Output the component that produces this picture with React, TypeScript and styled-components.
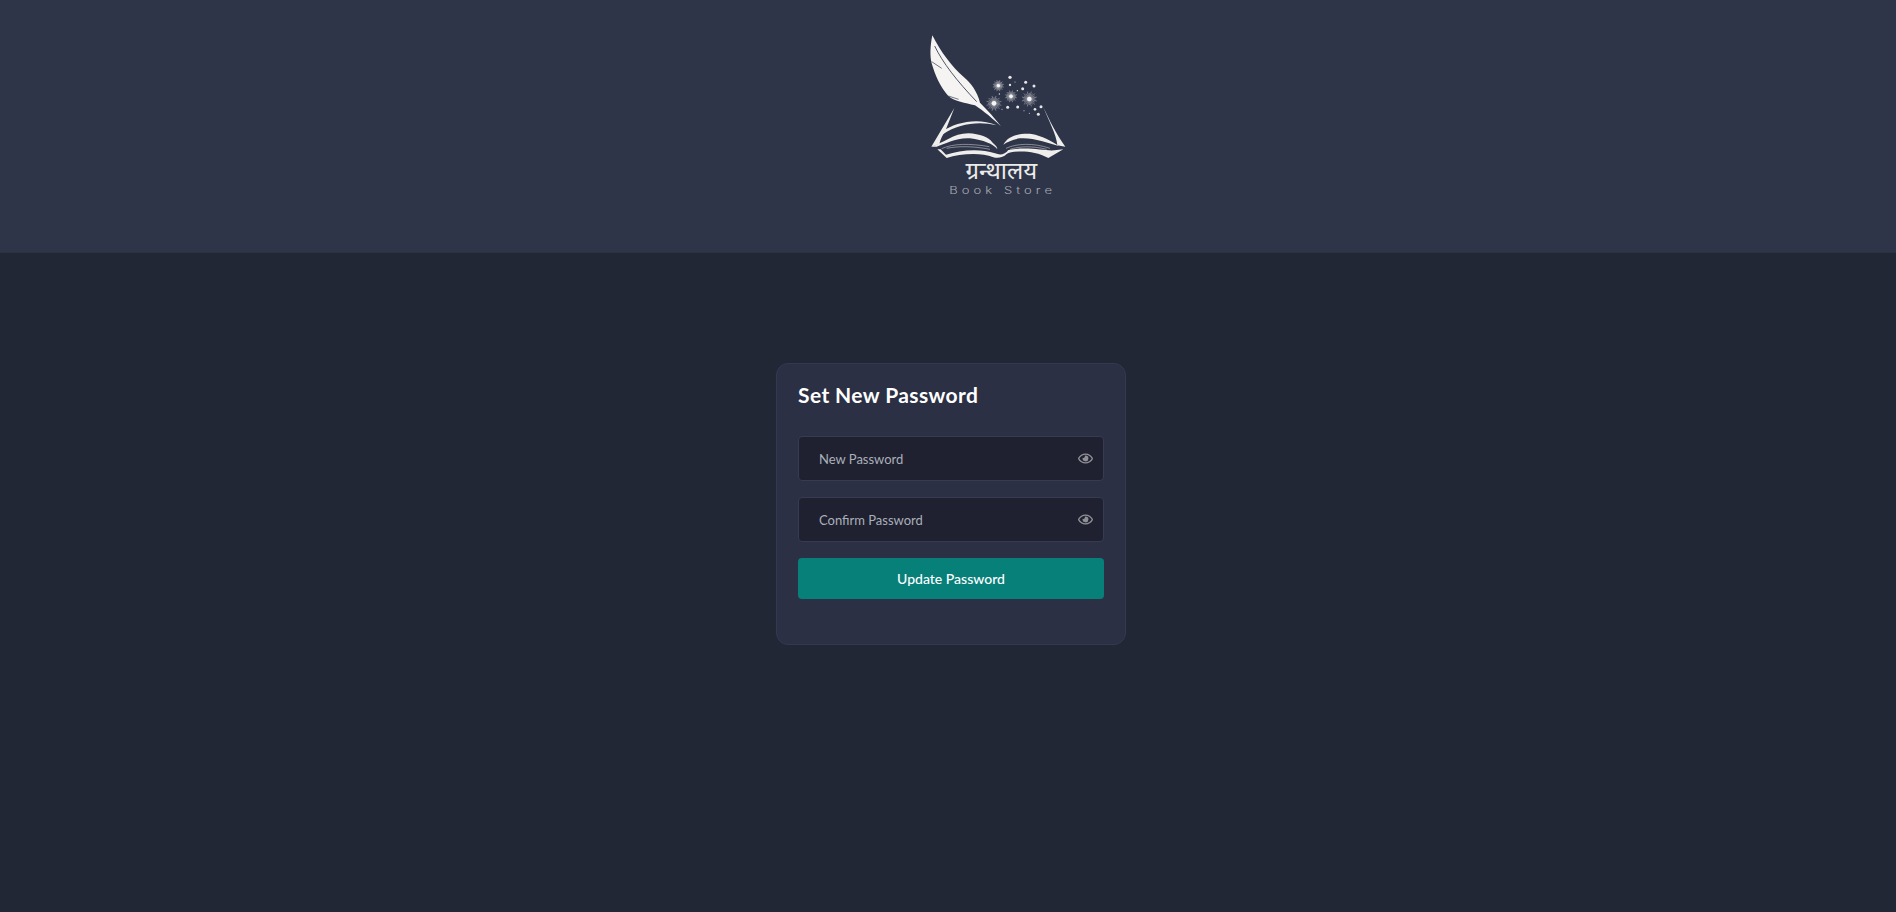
import React from "react";
import styled, { createGlobalStyle } from "styled-components";
import { FaRegEye } from "react-icons/fa";

const GlobalStyle = createGlobalStyle`
  html, body {
    margin: 0;
    padding: 0;
    background: #212735;
    font-family: "Lato", "Liberation Sans", sans-serif;
  }
  * { box-sizing: border-box; }
`;

const Page = styled.div`
  height: 912px;
  overflow: hidden;
  background: #212735;
  display: flex;
  flex-direction: column;
`;

const Header = styled.header`
  height: 253px;
  flex-shrink: 0;
  background: #2f3549;
  border-bottom: 1px solid #2b3143;
  display: flex;
  justify-content: center;
  align-items: flex-start;
  padding: 20px 0 0 104px;
`;

const Logo = styled.svg`
  width: 200px;
  height: 190px;
  display: block;
`;

const Main = styled.main`
  display: flex;
  justify-content: center;
  padding: 110px 0 0 6px;
`;

const Card = styled.form`
  width: 350px;
  height: 282px;
  background: #2b3044;
  border: 1px solid #333950;
  border-radius: 12px;
  padding: 16px 21px 0;
  display: flex;
  flex-direction: column;
`;

const Title = styled.h2`
  margin: 0 0 26px;
  font-family: "Lato", sans-serif;
  font-size: 21px;
  line-height: 30px;
  font-weight: 700;
  letter-spacing: 0.4px;
  color: #ffffff;
`;

const Field = styled.div`
  position: relative;
  height: 45px;
  margin-bottom: 16px;
`;

const Input = styled.input`
  width: 100%;
  height: 100%;
  background: #1f2130;
  border: 1px solid #363b50;
  border-radius: 4px;
  padding: 0 44px 0 20px;
  font-family: "Lato", sans-serif;
  font-size: 13px;
  color: #ffffff;
  outline: none;

  &::placeholder {
    color: #aab0ba;
    opacity: 1;
  }
`;

const EyeButton = styled.span`
  position: absolute;
  right: 11px;
  top: 15px;
  display: flex;
  color: #8f9095;
  font-size: 15px;
`;

const SubmitButton = styled.button`
  height: 41px;
  background: #08807a;
  border: none;
  border-radius: 4px;
  font-family: "Lato", sans-serif;
  font-size: 14px;
  font-weight: 500;
  color: #ffffff;
`;

const SparkRay = styled.line`
  stroke: #eeeeee;
  stroke-width: 1.2;
`;

function Spark({ x, y, r }: { x: number; y: number; r: number }) {
  const rays = Array.from({ length: 24 }, (_, i) => (i * Math.PI) / 12);
  return (
    <g>
      {rays.map((a, i) => {
        const len = i % 2 ? r : r * 0.8;
        return (
          <SparkRay
            key={i}
            x1={x}
            y1={y}
            x2={x + Math.cos(a) * len}
            y2={y + Math.sin(a) * len}
          />
        );
      })}
      <circle cx={x} cy={y} r={r * 0.3} fill="#f6f6f6" />
    </g>
  );
}

const dots: [number, number, number][] = [
  [330, 172, 5], [330, 195, 3.5], [377, 187, 4.5], [402, 198, 4.5], [368, 206, 4.5],
  [352, 212, 2], [298, 222, 2], [323, 262, 4.5], [353, 261, 4.5], [405, 268, 4],
  [423, 260, 4.5], [415, 283, 4.5], [372, 272, 1.5], [345, 186, 1.5], [388, 280, 1.5],
  [306, 268, 1.5],
];

function BookLogo() {
  return (
    <Logo viewBox="0 0 600 570" role="img" aria-label="Book Store logo">
      {/* feather */}
      <path
        d="M97 46 C90 80 90 110 95 130 C105 165 120 200 145 228 C165 245 195 248 225 256 C250 272 280 298 303 319 C285 295 262 270 240 248 C232 215 212 188 192 172 C155 140 122 95 97 46 Z"
        fill="#f5f4f3"
      />
      <path
        d="M104 78 C128 128 170 182 230 245"
        fill="none"
        stroke="#2f3549"
        strokeWidth="2.5"
      />
      <path d="M95 125 L125 145 M145 228 L176 238" stroke="#2f3549" strokeWidth="2" />

      {/* sparkles */}
      <Spark x={295} y={197} r={17} />
      <Spark x={282} y={250} r={23} />
      <Spark x={333} y={229} r={18} />
      <Spark x={388} y={237} r={23} />
      {dots.map(([x, y, r], i) => (
        <circle key={i} cx={x} cy={y} r={r} fill="#e6e6e6" />
      ))}

      {/* book */}
      <g fill="#efeeec">
        <path d="M163 264 L94 380 L118 372 C122 355 128 345 135 335 Z" />
        <path d="M124 335 C170 305 235 292 290 316 C235 302 175 312 130 342 Z" />
        <path d="M94 380 C130 370 160 340 205 340 C240 342 265 350 278 368 C288 376 292 382 292 388 C280 372 250 360 210 355 C170 352 135 372 110 380 Z" />
        <path d="M112 388 L140 414 C180 402 240 396 280 412 C295 416 310 412 320 402 C335 392 400 388 445 414 L490 388 L470 390 C440 396 390 378 325 390 C315 404 300 406 285 400 C240 384 180 390 138 404 L122 388 Z" />
        <path d="M430 262 C448 300 470 345 496 380 L472 376 C470 345 445 300 430 262 Z" />
        <path d="M310 374 C325 345 360 340 395 342 C425 348 455 362 476 378 C440 368 400 352 360 355 C340 358 322 365 310 374 Z" />
      </g>
      <g fill="none" stroke="#d4d4d6" strokeWidth="1.6">
        <path d="M125 386 C160 370 210 370 268 380" />
        <path d="M140 385 C175 378 220 378 270 388" />
        <path d="M318 385 C350 370 400 368 450 385" />
        <path d="M330 388 C360 378 400 378 440 388" />
      </g>

      {/* wordmark */}
      <text
        x="304"
        y="476"
        textAnchor="middle"
        fill="#ecebe9"
        fontSize="72"
        fontFamily="'Noto Sans Devanagari', 'Noto Sans', 'DejaVu Sans', sans-serif"
      >
        ग्रन्थालय
      </text>
      <text
        x="148"
        y="521"
        textLength="320"
        lengthAdjust="spacingAndGlyphs"
        fill="#a9abb2"
        fontSize="29"
        fontWeight="300"
        letterSpacing="9"
        fontFamily="'Inter', 'DejaVu Sans', sans-serif"
      >
        Book Store
      </text>
    </Logo>
  );
}

export default function App() {
  return (
    <Page>
      <GlobalStyle />
      <Header>
        <BookLogo />
      </Header>
      <Main>
        <Card onSubmit={(e) => e.preventDefault()}>
          <Title>Set New Password</Title>
          <Field>
            <Input type="password" placeholder="New Password" />
            <EyeButton>
              <FaRegEye />
            </EyeButton>
          </Field>
          <Field>
            <Input type="password" placeholder="Confirm Password" />
            <EyeButton>
              <FaRegEye />
            </EyeButton>
          </Field>
          <SubmitButton type="submit">Update Password</SubmitButton>
        </Card>
      </Main>
    </Page>
  );
}
